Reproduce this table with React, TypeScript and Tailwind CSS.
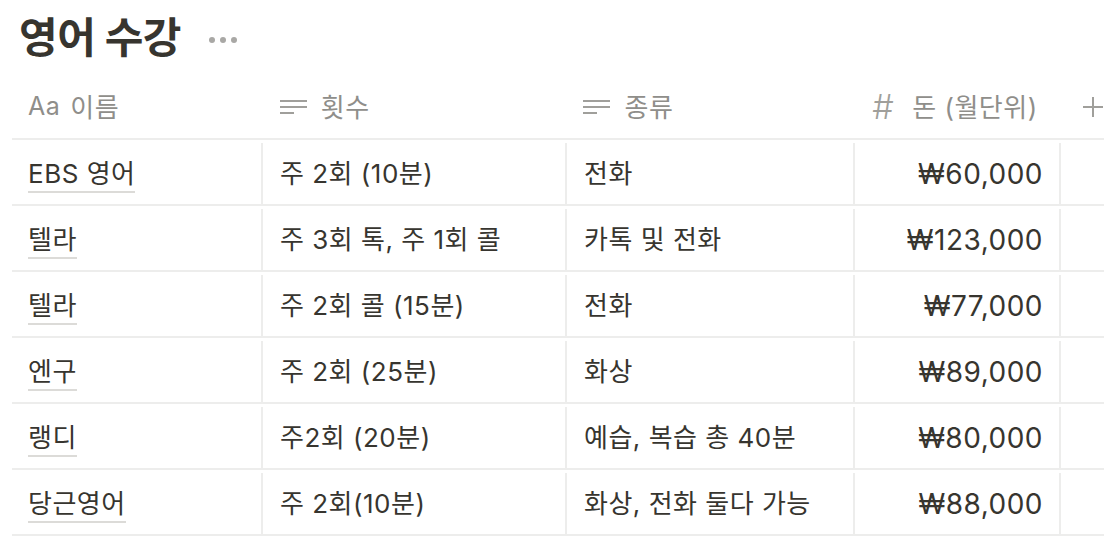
import React from "react"

// rows of the 영어 수강 database
const rows = [
  { name: "EBS 영어", count: "주 2회 (10분)", kind: "전화", price: "₩60,000" },
  { name: "텔라", count: "주 3회 톡, 주 1회 콜", kind: "카톡 및 전화", price: "₩123,000" },
  { name: "텔라", count: "주 2회 콜 (15분)", kind: "전화", price: "₩77,000" },
  { name: "엔구", count: "주 2회 (25분)", kind: "화상", price: "₩89,000" },
  { name: "랭디", count: "주2회 (20분)", kind: "예습, 복습 총 40분", price: "₩80,000" },
  { name: "당근영어", count: "주 2회(10분)", kind: "화상, 전화 둘다 가능", price: "₩88,000" },
]

function LinesIcon() {
  return (
    <svg width="27" height="20" viewBox="0 0 27 20" className="shrink-0">
      <rect x="0" y="3" width="27" height="2" fill="#a09f9b" />
      <rect x="0" y="9" width="27" height="2" fill="#a09f9b" />
      <rect x="0" y="15" width="14" height="2" fill="#a09f9b" />
    </svg>
  )
}

export default function App() {
  const font = { fontFamily: '"Inter", "Noto Sans CJK KR", sans-serif' }

  return (
    <div className="w-[1104px] h-[552px] bg-white overflow-hidden text-[#37352f] tracking-[0.5px]" style={font}>
      <div className="flex items-center pl-[19px] pt-[14px] h-[62px]">
        <h1 className="text-[42px] leading-[48px] font-bold tracking-[-0.5px]">영어 수강</h1>
        <div className="ml-[28px] mt-[4px] flex gap-[5px]">
          <span className="w-[6px] h-[6px] rounded-full bg-[#a9a8a5]" />
          <span className="w-[6px] h-[6px] rounded-full bg-[#a9a8a5]" />
          <span className="w-[6px] h-[6px] rounded-full bg-[#a9a8a5]" />
        </div>
      </div>

      <div className="pl-[12px] pt-[14px]">
        {/* 헤더 */}
        <div className="flex h-[64px] items-center border-b-2 border-[#ededec] text-[26px] text-[#8f8e8a]">
          <div className="w-[249px] pl-[16px] flex items-center gap-[10px]">
            <span className="text-[25px]">Aa</span>
            <span>이름</span>
          </div>
          <div className="w-[304px] pl-[19px] flex items-center gap-[14px]">
            <LinesIcon />
            <span>횟수</span>
          </div>
          <div className="w-[288px] pl-[19px] flex items-center gap-[14px]">
            <LinesIcon />
            <span>종류</span>
          </div>
          <div className="w-[208px] pl-[20px] flex items-center gap-[18px]">
            <span className="text-[34px] leading-none font-light text-[#a09f9b]">#</span>
            <span>돈 (월단위)</span>
          </div>
          <div className="flex-1 pl-[22px] flex items-center">
            <svg width="22" height="22" viewBox="0 0 22 22">
              <path d="M11 1v20M1 11h20" stroke="#a09f9b" strokeWidth="2" />
            </svg>
          </div>
        </div>

        {/* 본문 */}
        {rows.map((row, i) => (
          <div key={i} className="flex h-[66px] border-b-2 border-[#ededec] text-[26px] pt-[3px]">
            <div className="w-[249px] pl-[16px] flex items-center">
              <span className="border-b-2 border-[#dcdbd8] leading-[34px] mt-[3px]">{row.name}</span>
            </div>
            <div className="w-[304px] pl-[17px] flex items-center border-l-2 border-[#ededec]">{row.count}</div>
            <div className="w-[288px] pl-[17px] flex items-center border-l-2 border-[#ededec]">{row.kind}</div>
            <div className="w-[208px] pr-[16px] flex items-center justify-end border-x-2 border-[#ededec] text-[28px]">
              {row.price}
            </div>
            <div className="flex-1" />
          </div>
        ))}
      </div>
    </div>
  )
}
